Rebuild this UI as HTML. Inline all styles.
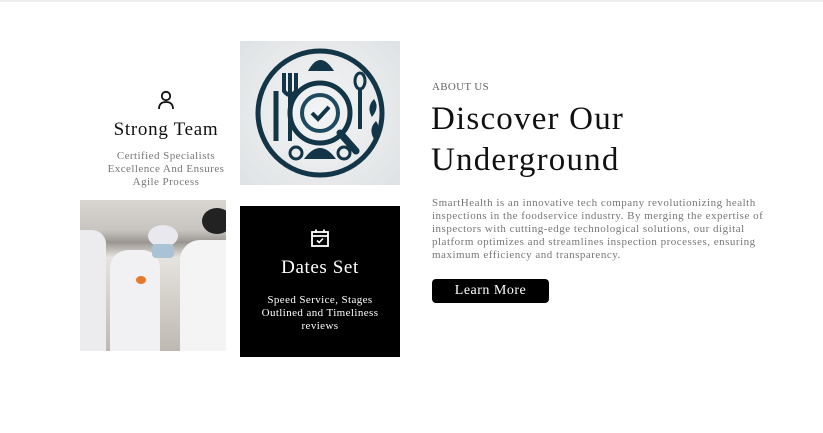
<!DOCTYPE html>
<html><head><style>
body{margin:0;width:823px;height:433px;background:#fff;font-family:"Liberation Serif",serif;position:relative;overflow:hidden}
.topline{position:absolute;left:0;top:0;width:823px;height:2px;background:#eee}
.a{position:absolute}
.c{text-align:center}
</style></head><body>
<div class="topline"></div>

<div class="a c" style="left:80px;top:90px;width:172px">
<svg width="18" height="20" viewBox="0 0 18 20"><circle cx="9" cy="6" r="4.2" fill="none" stroke="#111" stroke-width="1.8"/><path d="M2 19 Q2 12 9 12 Q16 12 16 19" fill="none" stroke="#111" stroke-width="1.8"/></svg>
</div>
<div class="a c" style="left:76px;top:119px;width:180px;font-size:19px;letter-spacing:0.7px;color:#111">Strong Team</div>
<div class="a c" style="left:70px;top:150px;width:192px;font-size:11px;letter-spacing:0.45px;line-height:13px;color:#777">Certified Specialists<br>Excellence And Ensures<br>Agile Process</div>

<div class="a" style="left:240px;top:41px;width:160px;height:144px;background:radial-gradient(circle,#f3f4f5,#dfe2e4)">
<svg width="160" height="144" viewBox="0 0 160 144">
<circle cx="80" cy="72" r="62" fill="none" stroke="#123548" stroke-width="5"/>
<circle cx="80" cy="72" r="30" fill="none" stroke="#123548" stroke-width="5"/>
<circle cx="80" cy="72" r="18" fill="none" stroke="#1d4a60" stroke-width="4"/>
<path d="M72 72 L78 78 L89 66" fill="none" stroke="#123548" stroke-width="4"/>
<path d="M100 92 L116 110" stroke="#123548" stroke-width="7" stroke-linecap="round"/>
<path d="M50 32 V100 M44 32 V50 Q50 58 56 50 V32" fill="none" stroke="#123548" stroke-width="4"/>
<path d="M36 50 V100" stroke="#123548" stroke-width="5"/>
<ellipse cx="120" cy="40" rx="5" ry="8" fill="none" stroke="#123548" stroke-width="3"/>
<path d="M120 48 V88" stroke="#123548" stroke-width="4"/>
<path d="M68 30 Q80 8 94 30 Z" fill="#123548"/>
<path d="M64 118 Q80 96 96 118 Z" fill="#123548"/>
<circle cx="56" cy="112" r="6" fill="none" stroke="#123548" stroke-width="3"/>
<circle cx="104" cy="112" r="6" fill="none" stroke="#123548" stroke-width="3"/>
<path d="M134 58 Q126 66 132 76 Q140 66 134 58Z M136 80 Q128 88 134 98 Q142 88 136 80Z" fill="#123548"/>
</svg>
</div>

<div class="a" style="left:80px;top:200px;width:146px;height:151px;background:linear-gradient(180deg,#d9d6d2 0,#c8c5c0 20%,#9a9590 28%,#e6e4e0 38%,#d8d4ce 60%,#bdb8b2 100%);overflow:hidden">
<div class="a" style="left:30px;top:50px;width:50px;height:101px;background:#f1f1f3;border-radius:18px 18px 0 0"></div>
<div class="a" style="left:68px;top:25px;width:30px;height:22px;background:#e8e8ee;border-radius:50%"></div>
<div class="a" style="left:72px;top:44px;width:22px;height:14px;background:#a9c3d4;border-radius:4px"></div>
<div class="a" style="left:100px;top:40px;width:46px;height:111px;background:#f4f4f4;border-radius:20px 0 0 0"></div>
<div class="a" style="left:122px;top:8px;width:30px;height:26px;background:#222;border-radius:50%"></div>
<div class="a" style="left:0;top:30px;width:26px;height:121px;background:#ececee;border-radius:0 14px 0 0"></div>
<div class="a" style="left:56px;top:76px;width:10px;height:8px;background:#e67a2a;border-radius:50%"></div>
</div>

<div class="a" style="left:240px;top:206px;width:160px;height:151px;background:#000">
<div class="a c" style="left:0;top:22px;width:160px"><svg width="20" height="20" viewBox="0 0 20 20"><rect x="2" y="4" width="16" height="14" fill="none" stroke="#fff" stroke-width="1.8"/><path d="M2 8 H18 M6 1.5 V5 M14 1.5 V5" stroke="#fff" stroke-width="1.8"/><path d="M7 12.5 L9.2 14.5 L13 10.5" fill="none" stroke="#fff" stroke-width="1.6"/></svg></div>
<div class="a c" style="left:0;top:51px;width:160px;font-size:19px;letter-spacing:0.6px;color:#fff">Dates Set</div>
<div class="a c" style="left:0;top:88px;width:160px;font-size:11px;letter-spacing:0.4px;line-height:13px;color:#fff">Speed Service, Stages<br>Outlined and Timeliness<br>reviews</div>
</div>

<div class="a" style="left:432px;top:81px;font-size:11px;letter-spacing:0.3px;color:#666">ABOUT US</div>
<div class="a" style="left:431px;top:99px;font-size:33px;letter-spacing:1.2px;line-height:41px;color:#111">Discover Our<br>Underground</div>
<div class="a" style="left:432px;top:197px;width:340px;font-size:11px;letter-spacing:0.5px;line-height:13px;color:#777">SmartHealth is an innovative tech company revolutionizing health inspections in the foodservice industry. By merging the expertise of inspectors with cutting-edge technological solutions, our digital platform optimizes and streamlines inspection processes, ensuring maximum efficiency and transparency.</div>
<div class="a c" style="left:432px;top:279px;width:117px;height:24px;line-height:24px;background:#000;border-radius:4px;color:#fff;font-size:14px;letter-spacing:0.5px">Learn More</div>
</body></html>
